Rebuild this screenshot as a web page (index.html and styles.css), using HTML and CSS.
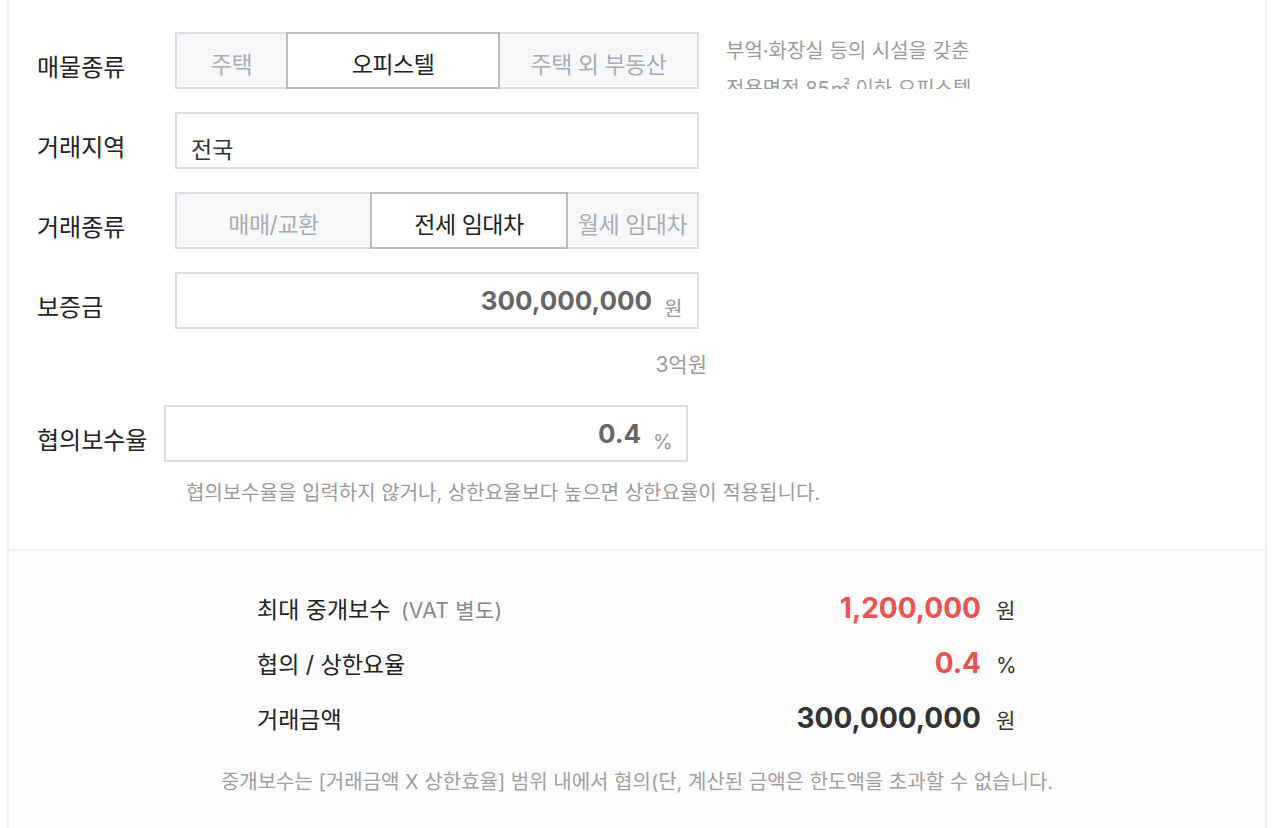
FILE: index.html
```html
<!DOCTYPE html>
<html lang="ko">
<head>
<meta charset="utf-8">
<title>중개보수 계산</title>
<link rel="stylesheet" href="styles.css">
</head>
<body>
<div class="wrap">
  <section class="form">
    <div class="row">
      <div class="label">매물종류</div>
      <div class="seg">
        <div class="seg-item w113">주택</div>
        <div class="seg-item w212 on">오피스텔</div>
        <div class="seg-item w199">주택 외 부동산</div>
      </div>
      <div class="help">부엌·화장실 등의 시설을 갖춘<br>전용면적 85㎡ 이하 오피스텔</div>
    </div>
    <div class="row">
      <div class="label">거래지역</div>
      <div class="box region">전국</div>
    </div>
    <div class="row">
      <div class="label">거래종류</div>
      <div class="seg">
        <div class="seg-item w197">매매/교환</div>
        <div class="seg-item w196 on">전세 임대차</div>
        <div class="seg-item w131">월세 임대차</div>
      </div>
    </div>
    <div class="row">
      <div class="label">보증금</div>
      <div class="box amount"><span class="num">300,000,000</span><span class="unit">원</span></div>
    </div>
    <div class="hint">3억원</div>
    <div class="row row-rate">
      <div class="label label-wide">협의보수율</div>
      <div class="box amount"><span class="num">0.4</span><span class="unit">%</span></div>
    </div>
    <p class="note">협의보수율을 입력하지 않거나, 상한요율보다 높으면 상한요율이 적용됩니다.</p>
  </section>
  <section class="result">
    <div class="res-table">
      <div class="res-row">
        <div class="res-label">최대 중개보수 <span class="sub">(VAT 별도)</span></div>
        <div class="res-val red">1,200,000</div>
        <div class="res-unit">원</div>
      </div>
      <div class="res-row">
        <div class="res-label">협의 / 상한요율</div>
        <div class="res-val red">0.4</div>
        <div class="res-unit">%</div>
      </div>
      <div class="res-row">
        <div class="res-label">거래금액</div>
        <div class="res-val">300,000,000</div>
        <div class="res-unit">원</div>
      </div>
    </div>
    <p class="res-note">중개보수는 [거래금액 X 상한효율] 범위 내에서 협의(단, 계산된 금액은 한도액을 초과할 수 없습니다.</p>
  </section>
</div>
</body>
</html>
```
FILE: styles.css
```css
html, body {
  margin: 0;
  padding: 0;
  background: #fff;
}
body {
  font-family: Inter, "Noto Sans CJK KR", sans-serif;
  color: #222;
}
.wrap {
  margin-left: 7px;
  width: 1256px;
  border-left: 2px solid #efefef;
  border-right: 2px solid #efefef;
  min-height: 828px;
  display: flex;
  flex-direction: column;
}
.form {
  padding: 32px 0 0 28px;
  height: 549px;
  flex: none;
  box-sizing: border-box;
}
.row {
  display: flex;
  align-items: flex-start;
  margin-bottom: 23px;
}
.label {
  width: 138px;
  flex: none;
  font-size: 24px;
  line-height: 28px;
  padding-top: 22px;
  color: #222;
}
.label-wide {
  width: 127px;
}
.seg {
  display: flex;
  height: 57px;
}
.seg-item {
  box-sizing: border-box;
  height: 57px;
  border: 2px solid #dcdee1;
  background: #f7f8fa;
  color: #aaacaf;
  font-size: 23px;
  display: flex;
  align-items: center;
  justify-content: center;
  padding-top: 5px;
  margin-left: -2px;
  white-space: nowrap;
  letter-spacing: -0.5px;
}
.seg-item:first-child {
  margin-left: 0;
}
.seg-item.on {
  background: #fff;
  border-color: #bdbdbd;
  color: #222;
  position: relative;
  z-index: 1;
}
.w113 { width: 113px; }
.w212 { width: 214px; }
.w199 { width: 201px; }
.w197 { width: 197px; }
.w196 { width: 198px; }
.w131 { width: 133px; }
.help {
  margin-left: 27px;
  height: 57px;
  overflow: hidden;
  font-size: 20px;
  line-height: 38px;
  color: #9a9a9a;
}
.box {
  box-sizing: border-box;
  width: 524px;
  height: 57px;
  border: 2px solid #dcdee1;
  background: #fff;
}
.region {
  font-size: 23px;
  line-height: 30px;
  padding: 21px 0 0 14px;
  color: #333;
}
.amount {
  display: flex;
  justify-content: flex-end;
  align-items: baseline;
  padding: 11px 13px 0 0;
}
.num {
  font-size: 26px;
  font-weight: 700;
  color: #666;
}
.unit {
  font-size: 20px;
  color: #999;
  margin-left: 12px;
  position: relative;
  top: 6px;
  width: 20px;
}
.hint {
  width: 670px;
  text-align: right;
  font-size: 21px;
  line-height: 28px;
  color: #9a9a9a;
  margin-top: -1px;
  margin-bottom: 26px;
}
.row-rate {
  margin-bottom: 0;
}
.note {
  margin: 17px 0 0 149px;
  font-size: 20px;
  line-height: 28px;
  color: #9a9a9a;
}
.result {
  flex: 1;
  background: #fcfcfc;
  border-top: 2px solid #f1f1f1;
  padding-top: 40px;
}
.res-table {
  width: 760px;
  margin: 0 auto;
}
.res-row {
  display: flex;
  align-items: baseline;
  height: 55px;
}
.res-label {
  flex: 1;
  font-size: 23px;
  color: #222;
}
.sub {
  font-size: 21px;
  color: #888;
  margin-left: 4px;
  letter-spacing: 0.3px;
}
.res-val {
  font-size: 28px;
  font-weight: 700;
  color: #333;
}
.res-val.red {
  color: #ec5350;
}
.res-unit {
  width: 21px;
  margin-left: 15px;
  font-size: 21px;
  color: #333;
}
.res-note {
  margin: 12px 0 0;
  text-align: center;
  font-size: 20px;
  line-height: 28px;
  color: #a0a0a0;
}
```
